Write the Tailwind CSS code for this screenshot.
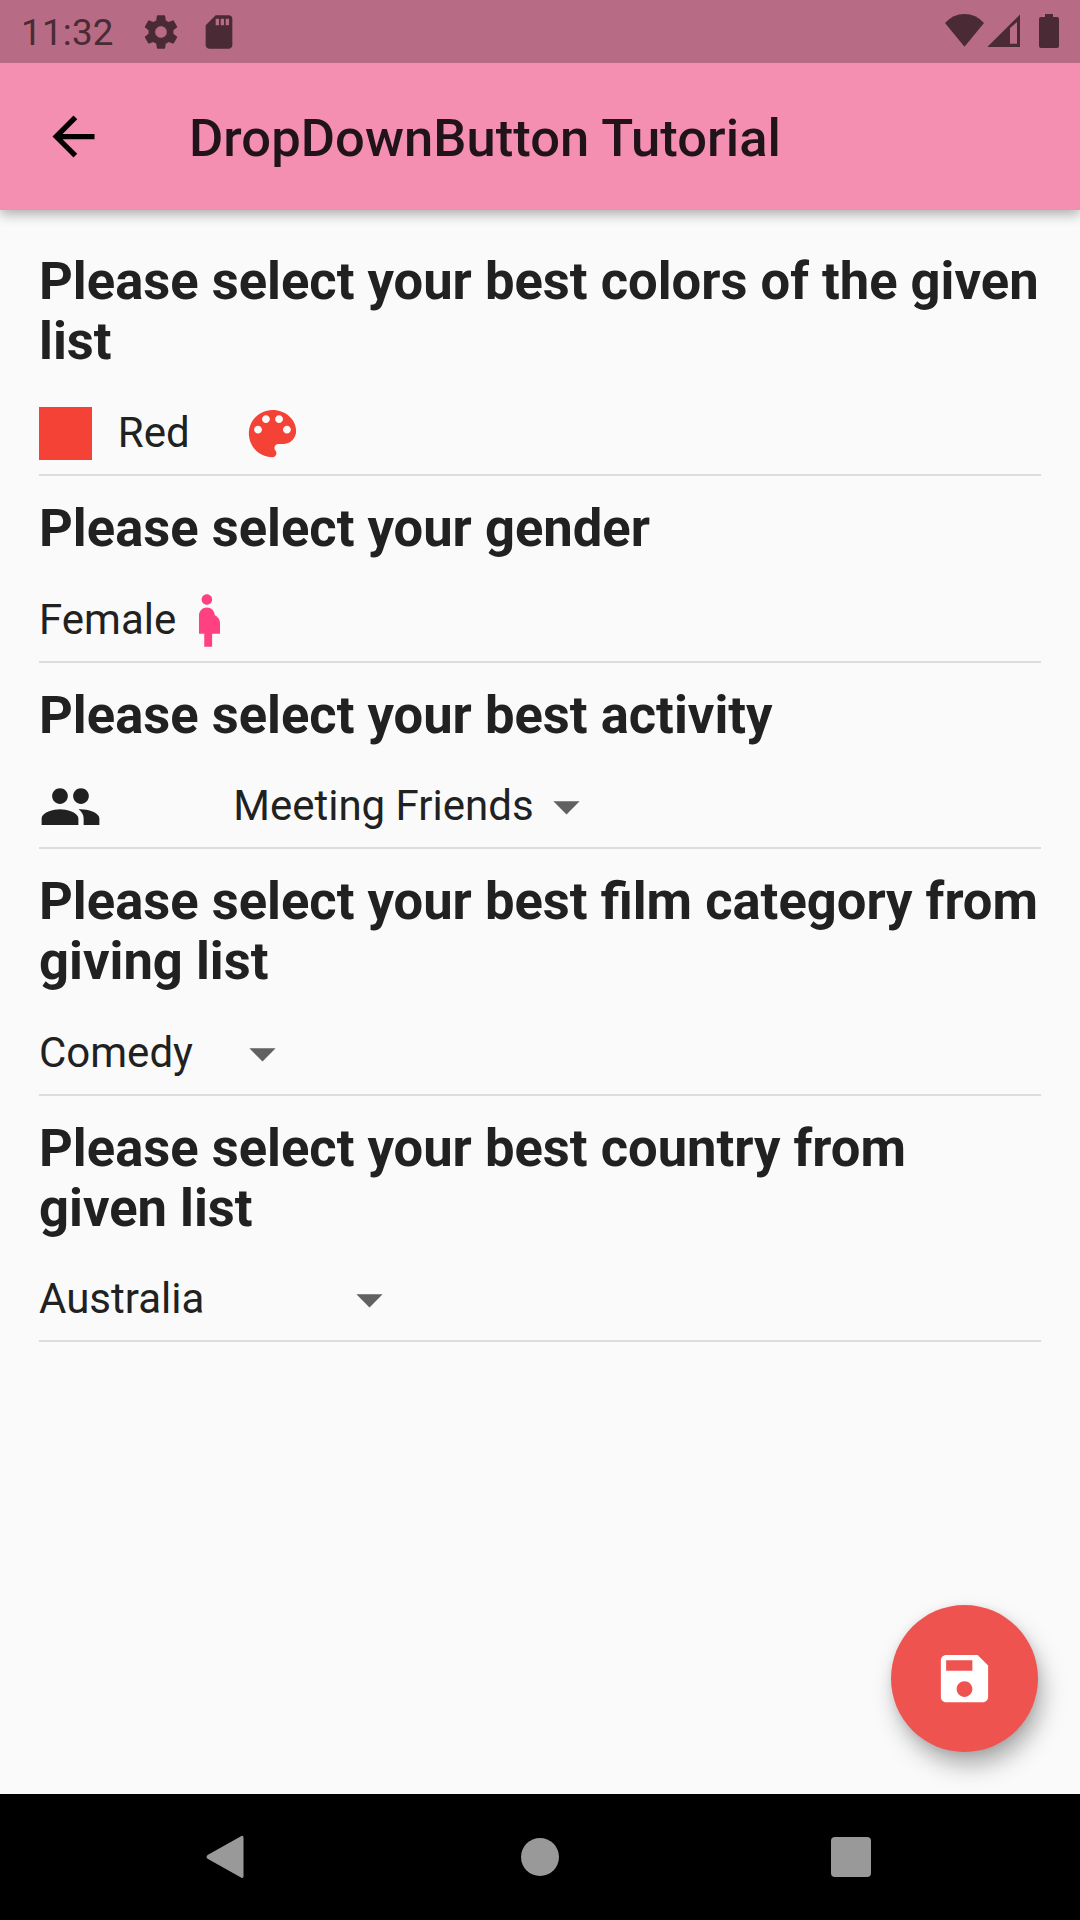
<!DOCTYPE html>
<html lang="en">
<head>
<meta charset="utf-8">
<title>DropDownButton Tutorial</title>
<script src="https://cdn.jsdelivr.net/npm/@tailwindcss/browser@4"></script>
</head>
<body class="w-[1080px] h-[1920px] overflow-hidden bg-[#fafafa] font-['Roboto',sans-serif] text-[#212121] flex flex-col">
<header class="h-[210px] shrink-0 bg-[#f48fb1] shadow-[0_4px_12px_rgba(0,0,0,0.32)]">
  <!-- status bar -->
  <div class="h-[63px] bg-[#b76b85] text-[#4a2b35] flex items-center pl-[21px] pr-[18px]">
    <span class="text-[36.75px] tracking-[0.25px] leading-[62px] w-[120px] pt-[3px]">11:32</span>
    <svg class="w-[40px] h-[40px]" viewBox="0 0 24 24" fill="currentColor"><path d="M19.43 12.98c.04-.32.07-.64.07-.98s-.03-.66-.07-.98l2.11-1.65c.19-.15.24-.42.12-.64l-2-3.46c-.12-.22-.39-.3-.61-.22l-2.49 1c-.52-.4-1.080-.73-1.690-.98l-.38-2.650C14.460 2.180 14.250 2 14 2h-4c-.25 0-.46.18-.49.42l-.38 2.650c-.61.25-1.170.59-1.690.98l-2.490-1c-.23-.09-.49 0-.61.22l-2 3.460c-.13.22-.07.49.12.64l2.110 1.650c-.04.32-.07.65-.07.98s.03.66.07.98l-2.110 1.650c-.19.15-.24.42-.12.64l2 3.460c.12.22.39.3.61.22l2.490-1c.52.4 1.080.73 1.690.98l.38 2.650c.03.24.24.42.49.42h4c.25 0 .46-.18.49-.42l.38-2.650c.61-.25 1.170-.59 1.690-.98l2.490 1c.23.09.49 0 .61-.22l2-3.460c.12-.22.07-.49-.12-.64l-2.110-1.650zM12 15.500c-1.930 0-3.500-1.570-3.500-3.500s1.570-3.500 3.500-3.500 3.500 1.570 3.500 3.500-1.570 3.500-3.500 3.500z"/></svg>
    <svg class="w-[40px] h-[40px] ml-[18px]" viewBox="0 0 24 24" fill="currentColor"><path d="M18 2h-8L4.020 8 4 20c0 1.100.9 2 2 2h12c1.100 0 2-.9 2-2V4c0-1.100-.9-2-2-2zm-6 6h-2V4h2v4zm3 0h-2V4h2v4zm3 0h-2V4h2v4z"/></svg>
    <svg class="w-[120px] h-[40px] ml-auto" viewBox="942 12 120 40" fill="currentColor"><path d="M945 23Q953 14 964.500 14T984 23L964.500 46.700Z"/><path fill-rule="evenodd" d="M987.300 47L1020 14.500V47ZM1010 28V43.700H1017V22Z"/><path d="M1045 14h8v3h4q2 0 2 2v27q0 2-2 2h-16q-2 0-2-2V19q0-2 2-2h4z"/></svg>
  </div>
  <!-- app bar -->
  <div class="h-[147px] flex items-center pl-[42px]">
    <svg class="w-[63px] h-[63px] text-black" viewBox="0 0 24 24" fill="currentColor"><path d="M20 11H7.830l5.590-5.590L12 4l-8 8 8 8 1.410-1.410L7.830 13H20v-2z"/></svg>
    <h1 class="text-[52.500px] tracking-[0.06px] font-medium ml-[84px] pt-[3px] text-[#20131a]">DropDownButton Tutorial</h1>
  </div>
</header>

<main class="grow px-[39px] pt-[41px] relative">
  <section>
    <h2 class="text-[52.540px] font-bold leading-[60px]">Please select your best colors of the given list</h2>
    <div class="h-[105px] mr-[0.5px] border-b-2 border-[#dcdcdc] flex items-end pb-[9px]">
      <div class="w-[52.500px] h-[52.500px] mb-[5.500px] bg-[#f44336]"></div>
      <span class="text-[42px] leading-[49px] mb-2 ml-[26.250px] w-[123px]">Red</span>
      <svg class="w-[63px] h-[63px] text-[#f44336]" viewBox="0 0 24 24" fill="currentColor"><path d="M12 3c-4.970 0-9 4.030-9 9s4.030 9 9 9c.83 0 1.500-.67 1.500-1.500 0-.39-.15-.74-.39-1.010-.23-.26-.38-.61-.38-.99 0-.83.67-1.500 1.500-1.500H16c2.760 0 5-2.240 5-5 0-4.420-4.030-8-9-8zm-5.500 9c-.83 0-1.500-.67-1.500-1.500S5.670 9 6.500 9 8 9.670 8 10.500 7.330 12 6.500 12zm3-4C8.670 8 8 7.330 8 6.500S8.670 5 9.500 5s1.500.67 1.500 1.500S10.330 8 9.500 8zm5 0c-.83 0-1.500-.67-1.500-1.500S13.670 5 14.500 5s1.500.67 1.500 1.500S15.330 8 14.500 8zm3 4c-.83 0-1.500-.67-1.500-1.500S16.670 9 17.500 9s1.500.67 1.500 1.500-.67 1.500-1.500 1.500z"/></svg>
    </div>
  </section>
  <section class="pt-[22px]">
    <h2 class="text-[52.540px] font-bold leading-[60px]">Please select your gender</h2>
    <div class="h-[105px] mr-[0.5px] border-b-2 border-[#dcdcdc] flex items-end pb-[9px]">
      <span class="text-[42px] leading-[49px] mb-2 w-[139px]">Female</span>
      <svg class="w-[63px] h-[63px] text-[#ff4081]" viewBox="0 0 24 24" fill="currentColor"><path d="M9 4c0-1.110.89-2 2-2s2 .89 2 2-.89 2-2 2-2-.89-2-2zm7 9c-.01-1.340-.83-2.510-2-3 0-1.660-1.340-3-3-3s-3 1.340-3 3v7h2v5h3v-5h3v-4z"/></svg>
    </div>
  </section>
  <section class="pt-[22px]">
    <h2 class="text-[52.540px] font-bold leading-[60px]">Please select your best activity</h2>
    <div class="h-[104px] mr-[0.5px] border-b-2 border-[#dcdcdc] flex items-end pb-[9px]">
      <svg class="w-[63px] h-[63px] -ml-[0.5px]" viewBox="0 0 24 24" fill="currentColor"><path d="M16 11c1.660 0 2.990-1.340 2.990-3S17.660 5 16 5c-1.660 0-3 1.340-3 3s1.340 3 3 3zm-8 0c1.660 0 2.990-1.340 2.990-3S9.660 5 8 5C6.340 5 5 6.340 5 8s1.340 3 3 3zm0 2c-2.330 0-7 1.170-7 3.500V19h14v-2.500c0-2.330-4.670-3.500-7-3.500zm8 0c-.29 0-.62.02-.97.05 1.160.84 1.970 1.970 1.970 3.450V19h6v-2.500c0-2.330-4.670-3.500-7-3.500z"/></svg>
      <span class="text-[42px] leading-[49px] mb-2 ml-[131.750px] w-[302px]">Meeting Friends</span>
      <svg class="w-[63px] h-[63px] text-[#616161]" viewBox="0 0 24 24" fill="currentColor"><path d="M7 10l5 5 5-5z"/></svg>
    </div>
  </section>
  <section class="pt-[22px]">
    <h2 class="text-[52.540px] font-bold leading-[60px]">Please select your best film category from giving list</h2>
    <div class="h-[105px] mr-[0.5px] border-b-2 border-[#dcdcdc] flex items-end pb-[9px]">
      <span class="text-[42px] leading-[49px] mb-2 w-[192px]">Comedy</span>
      <svg class="w-[63px] h-[63px] text-[#616161]" viewBox="0 0 24 24" fill="currentColor"><path d="M7 10l5 5 5-5z"/></svg>
    </div>
  </section>
  <section class="pt-[22px]">
    <h2 class="text-[52.540px] font-bold leading-[60px]">Please select your best country from given list</h2>
    <div class="h-[104px] mr-[0.5px] border-b-2 border-[#dcdcdc] flex items-end pb-[9px]">
      <span class="text-[42px] leading-[49px] mb-2 w-[299px]">Australia</span>
      <svg class="w-[63px] h-[63px] text-[#616161]" viewBox="0 0 24 24" fill="currentColor"><path d="M7 10l5 5 5-5z"/></svg>
    </div>
  </section>
  <button class="absolute right-[42px] bottom-[42px] w-[147px] h-[147px] rounded-full bg-[#ef5350] text-white flex items-center justify-center shadow-[5px_14px_24px_-2px_rgba(0,0,0,0.34),0_1px_8px_rgba(0,0,0,0.08)]" aria-label="Save">
    <svg class="w-[63px] h-[63px]" viewBox="0 0 24 24" fill="currentColor"><path d="M17 3H5c-1.110 0-2 .9-2 2v14c0 1.100.89 2 2 2h14c1.100 0 2-.9 2-2V7l-4-4zm-5 16c-1.660 0-3-1.340-3-3s1.340-3 3-3 3 1.340 3 3-1.340 3-3 3zm3-10H5V5h10v4z"/></svg>
  </button>
</main>

<nav class="h-[126px] shrink-0 bg-black text-[#999999] flex items-center pl-[205px] pr-[209px] justify-between">
  <svg class="w-[40px] h-[44px]" viewBox="0 0 40 44" fill="currentColor"><path d="M36 1.200Q38.500 0 38.500 3V41Q38.500 44 36 42.500L3 24Q0 22 3 19.800Z"/></svg>
  <div class="w-[38px] h-[38px] rounded-full bg-[#999999] ml-[4px]"></div>
  <div class="w-[40px] h-[40px] rounded-[4px] bg-[#999999]"></div>
</nav>
</body>
</html>
